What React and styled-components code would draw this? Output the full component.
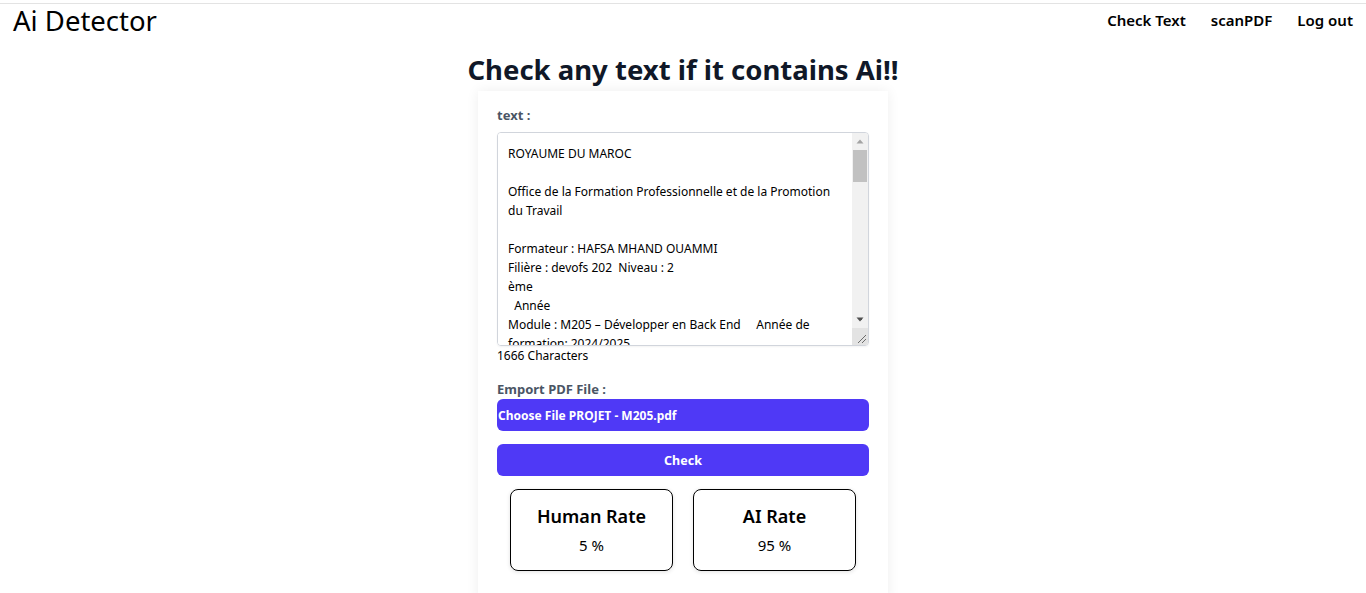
import React, { useState } from 'react';
import styled, { createGlobalStyle } from 'styled-components';

const GlobalStyle = createGlobalStyle`
  body {
    margin: 0;
    padding-top: 3px;
    background: #ffffff;
    font-family: "Noto Sans", "Open Sans", sans-serif;
    color: #000;
  }
`;

const initialText = `ROYAUME DU MAROC

Office de la Formation Professionnelle et de la Promotion
du Travail

Formateur : HAFSA MHAND OUAMMI
Filière : devofs 202  Niveau : 2
ème
  Année
Module : M205 – Développer en Back End     Année de
formation: 2024/2025

Projet de fin de module
Gestion des stagiaires
Contexte du projet
L'établissement souhaite disposer d'une application web permettant de gérer les stagiaires, leurs groupes et leurs notes.`;

const App = () => {
  const [text, setText] = useState(initialText);

  return (
    <>
      <GlobalStyle />
      <Navbar>
        <Brand>Ai Detector</Brand>
        <NavLinks>
          <NavLink href="#">Check Text</NavLink>
          <NavLink href="#">scanPDF</NavLink>
          <NavLink href="#">Log out</NavLink>
        </NavLinks>
      </Navbar>

      <Title>Check any text if it contains Ai!!</Title>

      <Card>
        <Label htmlFor="text" $top={-1} $bottom={8}>text :</Label>
        <TextBox>
          <TextArea
            id="text"
            value={text}
            onChange={(e) => setText(e.target.value)}
          />
          <ScrollTrack>
            <ScrollArrow>
              <svg width="16" height="17" viewBox="0 0 16 17">
                <path d="M4.5 10.5h7L8 6.5z" fill="#a3a3a3" />
              </svg>
            </ScrollArrow>
            <ThumbRail>
              <Thumb />
            </ThumbRail>
            <ScrollArrow>
              <svg width="16" height="17" viewBox="0 0 16 17">
                <path d="M4.5 6.5h7L8 10.5z" fill="#505050" />
              </svg>
            </ScrollArrow>
            <ResizeCorner>
              <svg width="16" height="17" viewBox="0 0 16 17">
                <path d="M6 15L14 7M10 15L14 11" stroke="#6b6b6b" strokeWidth="1" />
              </svg>
            </ResizeCorner>
          </ScrollTrack>
        </TextBox>
        <Counter>1666 Characters</Counter>

        <Label $top={16} $bottom={1}>Emport PDF File :</Label>
        <FileButton>Choose File PROJET - M205.pdf</FileButton>

        <CheckButton>Check</CheckButton>

        <Results>
          <RateBox>
            <RateTitle>Human Rate</RateTitle>
            <RateValue>5 %</RateValue>
          </RateBox>
          <RateBox>
            <RateTitle>AI Rate</RateTitle>
            <RateValue>95 %</RateValue>
          </RateBox>
        </Results>
      </Card>
    </>
  );
};

const Navbar = styled.nav`
  display: flex;
  align-items: center;
  justify-content: space-between;
  height: 34px;
  padding: 0 13px;
  border-top: 1px solid #e3e3e3;
`;

const Brand = styled.div`
  font-size: 27.5px;
  line-height: 32px;
  font-weight: 400;
  color: #000;
`;

const NavLinks = styled.div`
  display: flex;
  gap: 25px;
  margin-top: -2px;
`;

const NavLink = styled.a`
  font-size: 15px;
  font-weight: 600;
  color: #000;
  text-decoration: none;
`;

const Title = styled.h1`
  margin: 13px 0 0;
  text-align: center;
  font-size: 27.5px;
  line-height: 38px;
  font-weight: 700;
  color: #101828;
`;

const Card = styled.div`
  width: 372px;
  margin: 2px auto 0;
  padding: 16px 19px 30px;
  background: #fff;
  box-shadow: 0 0 12px rgba(0, 0, 0, 0.07);
`;

const Label = styled.label`
  display: block;
  margin-top: ${(p) => p.$top || 0}px;
  margin-bottom: ${(p) => p.$bottom || 0}px;
  font-size: 13px;
  font-weight: 700;
  color: #4a5565;
`;

const TextBox = styled.div`
  display: flex;
  box-sizing: border-box;
  width: 372px;
  height: 214px;
  border: 1px solid #d1d5dc;
  border-radius: 4px;
  overflow: hidden;
  box-shadow: 0 1px 2px rgba(0, 0, 0, 0.05);
`;

const TextArea = styled.textarea`
  flex: 1;
  min-width: 0;
  box-sizing: border-box;
  height: 100%;
  padding: 11px 10px 10px;
  border: none;
  font-family: "Noto Sans", "Open Sans", sans-serif;
  font-size: 12px;
  line-height: 19px;
  color: #000;
  overflow: hidden;
  resize: none;
  outline: none;
`;

const ScrollTrack = styled.div`
  width: 16px;
  display: flex;
  flex-direction: column;
  background: #f1f1f1;
`;

const ScrollArrow = styled.div`
  height: 17px;
  display: flex;
  svg {
    display: block;
  }
`;

const ThumbRail = styled.div`
  flex: 1;
  padding: 0 1px;
`;

const Thumb = styled.div`
  height: 32px;
  background: #c1c1c1;
`;

const ResizeCorner = styled.div`
  height: 17px;
  background: #e3e3e3;
  svg {
    display: block;
  }
`;

const Counter = styled.div`
  margin-top: 2px;
  font-size: 12px;
  line-height: 16px;
  color: #000;
`;

const FileButton = styled.div`
  box-sizing: border-box;
  height: 32px;
  display: flex;
  align-items: center;
  padding: 0 1px;
  background: #4f39f6;
  border-radius: 6px;
  color: #fff;
  font-size: 12px;
  font-weight: 700;
`;

const CheckButton = styled.button`
  display: block;
  width: 100%;
  height: 32px;
  margin-top: 13px;
  border: none;
  border-radius: 6px;
  background: #4f39f6;
  color: #fff;
  font-family: "Noto Sans", "Open Sans", sans-serif;
  font-size: 12.5px;
  font-weight: 700;
  cursor: pointer;
`;

const Results = styled.div`
  display: flex;
  justify-content: center;
  gap: 20px;
  margin-top: 13px;
`;

const RateBox = styled.div`
  box-sizing: border-box;
  width: 163px;
  height: 82px;
  display: flex;
  flex-direction: column;
  align-items: center;
  padding-top: 15px;
  border: 1px solid #000;
  border-radius: 8px;
  box-shadow: 0 1px 4px rgba(0, 0, 0, 0.12);
`;

const RateTitle = styled.div`
  font-size: 18px;
  font-weight: 600;
  line-height: 22px;
  color: #000;
`;

const RateValue = styled.div`
  margin-top: 8px;
  font-size: 15px;
  line-height: 20px;
  color: #000;
`;

export default App;
